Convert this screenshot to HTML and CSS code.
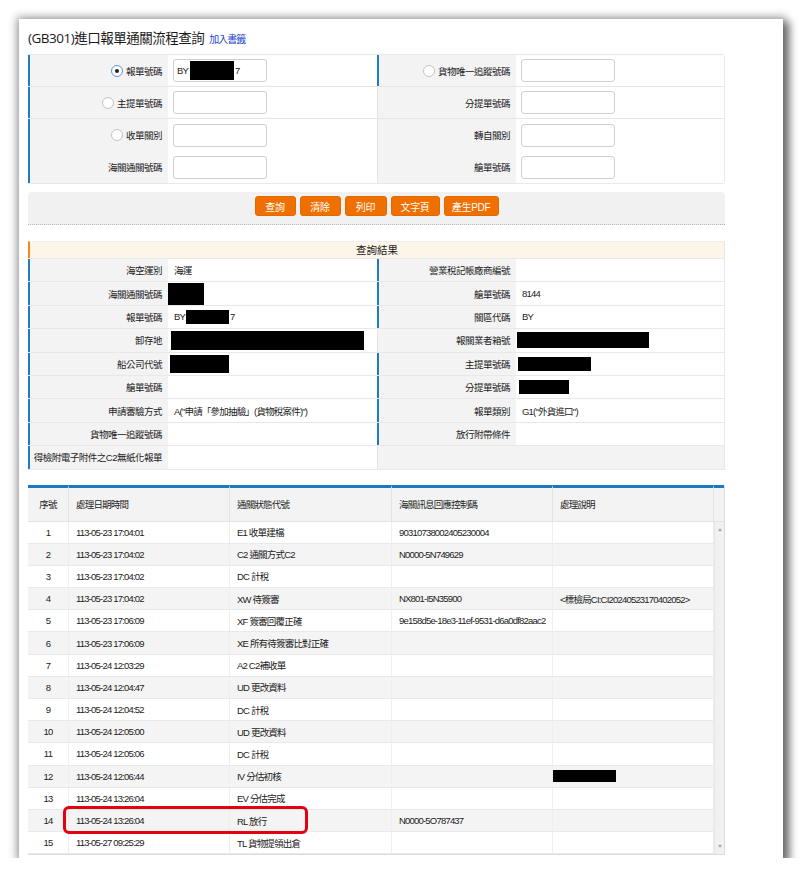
FILE: index.html
```
<!DOCTYPE html>
<html lang="zh-Hant">
<head>
<meta charset="utf-8">
<title>GB301</title>
<link rel="stylesheet" href="styles.css">
</head>
<body>
<div class="frame">
  <div class="title"><span>(GB301)進口報單通關流程查詢</span><a class="bm" href="#">加入書籤</a></div>

  <div class="form">
    <div class="frow sep">
      <div class="lab bl"><span class="radio on"></span>報單號碼</div>
      <div class="val"><span class="inp">BY<span class="rd rd-in"></span>7</span></div>
      <div class="lab bl"><span class="radio"></span>貨物唯一追蹤號碼</div>
      <div class="val"><span class="inp"></span></div>
    </div>
    <div class="frow sep">
      <div class="lab bl"><span class="radio"></span>主提單號碼</div>
      <div class="val"><span class="inp"></span></div>
      <div class="lab vl">分提單號碼</div>
      <div class="val"><span class="inp"></span></div>
    </div>
    <div class="frow">
      <div class="lab bl"><span class="radio"></span>收單關別</div>
      <div class="val"><span class="inp"></span></div>
      <div class="lab vl">轉自關別</div>
      <div class="val"><span class="inp"></span></div>
    </div>
    <div class="frow">
      <div class="lab bl">海關通關號碼</div>
      <div class="val"><span class="inp"></span></div>
      <div class="lab vl">艙單號碼</div>
      <div class="val"><span class="inp"></span></div>
    </div>
  </div>

  <div class="bar">
    <span class="btn b41">查詢</span>
    <span class="btn b41">清除</span>
    <span class="btn b42">列印</span>
    <span class="btn b49">文字頁</span>
    <span class="btn b55">產生PDF</span>
  </div>

  <div class="res">
    <div class="res-h">查詢結果</div>
    <div class="rrow"><div class="lab bl">海空運別</div><div class="rv">海運</div><div class="lab bl">營業稅記帳廠商編號</div><div class="rv"></div></div>
    <div class="rrow"><div class="lab bl">海關通關號碼</div><div class="rv"><span class="rd rd1"></span></div><div class="lab bl">艙單號碼</div><div class="rv">8144</div></div>
    <div class="rrow"><div class="lab bl">報單號碼</div><div class="rv">BY<span class="rd rd2"></span>7</div><div class="lab bl">關區代碼</div><div class="rv">BY</div></div>
    <div class="rrow"><div class="lab bl">卸存地</div><div class="rv"><span class="rd rd3"></span></div><div class="lab vl">報關業者箱號</div><div class="rv"><span class="rd rd4"></span></div></div>
    <div class="rrow"><div class="lab bl">船公司代號</div><div class="rv"><span class="rd rd5"></span></div><div class="lab bl">主提單號碼</div><div class="rv"><span class="rd rd6"></span></div></div>
    <div class="rrow"><div class="lab bl">艙單號碼</div><div class="rv"></div><div class="lab bl">分提單號碼</div><div class="rv"><span class="rd rd7"></span></div></div>
    <div class="rrow"><div class="lab bl">申請審驗方式</div><div class="rv">A("申請「參加抽驗」(貨物稅案件)")</div><div class="lab bl">報單類別</div><div class="rv">G1("外貨進口")</div></div>
    <div class="rrow"><div class="lab bl">貨物唯一追蹤號碼</div><div class="rv"></div><div class="lab bl">放行附帶條件</div><div class="rv"></div></div>
    <div class="rrow"><div class="lab bl">得檢附電子附件之C2無紙化報單</div><div class="rv"></div><div class="lab vl"></div><div class="rv g"></div></div>
  </div>

  <div class="gridbox">
    <table class="dt">
      <colgroup><col class="c0"><col class="c1"><col class="c2"><col class="c3"><col class="c4"></colgroup>
      <thead>
        <tr><th class="ctr">序號</th><th>處理日期時間</th><th>通關狀態代號</th><th>海關訊息回應控制碼</th><th>處理說明</th></tr>
      </thead>
      <tbody>
        <tr><td class="ctr">1</td><td>113-05-23 17:04:01</td><td>E1 收單建檔</td><td>90310738002405230004</td><td></td></tr>
        <tr><td class="ctr">2</td><td>113-05-23 17:04:02</td><td>C2 通關方式C2</td><td>N0000-5N749629</td><td></td></tr>
        <tr><td class="ctr">3</td><td>113-05-23 17:04:02</td><td>DC 計稅</td><td></td><td></td></tr>
        <tr><td class="ctr">4</td><td>113-05-23 17:04:02</td><td>XW 待簽審</td><td>NX801-I5N35900</td><td>&lt;標檢局CI:CI20240523170402052&gt;</td></tr>
        <tr><td class="ctr">5</td><td>113-05-23 17:06:09</td><td>XF 簽審回覆正確</td><td>9e158d5e-18e3-11ef-9531-d6a0df82aac2</td><td></td></tr>
        <tr><td class="ctr">6</td><td>113-05-23 17:06:09</td><td>XE 所有待簽審比對正確</td><td></td><td></td></tr>
        <tr><td class="ctr">7</td><td>113-05-24 12:03:29</td><td>A2 C2補收單</td><td></td><td></td></tr>
        <tr><td class="ctr">8</td><td>113-05-24 12:04:47</td><td>UD 更改資料</td><td></td><td></td></tr>
        <tr><td class="ctr">9</td><td>113-05-24 12:04:52</td><td>DC 計稅</td><td></td><td></td></tr>
        <tr><td class="ctr">10</td><td>113-05-24 12:05:00</td><td>UD 更改資料</td><td></td><td></td></tr>
        <tr><td class="ctr">11</td><td>113-05-24 12:05:06</td><td>DC 計稅</td><td></td><td></td></tr>
        <tr><td class="ctr">12</td><td>113-05-24 12:06:44</td><td>IV 分估初核</td><td></td><td><span class="rd rd8"></span></td></tr>
        <tr><td class="ctr">13</td><td>113-05-24 13:26:04</td><td>EV 分估完成</td><td></td><td></td></tr>
        <tr><td class="ctr">14</td><td>113-05-24 13:26:04</td><td>RL 放行</td><td>N0000-5O787437</td><td></td></tr>
        <tr><td class="ctr">15</td><td>113-05-27 09:25:29</td><td>TL 貨物提領出倉</td><td></td><td></td></tr>
      </tbody>
    </table>
    <div class="sbar">
      <div class="sb-head"></div>
      <div class="sb-track"><span class="arr up"></span><span class="arr dn"></span></div>
    </div>
    <div class="mark"></div>
  </div>
</div>
</body>
</html>
```

FILE: styles.css
```
* { box-sizing: border-box; }

body {
  margin: 0;
  background: #fff;
  font-family: "Liberation Sans", "Noto Sans CJK TC", sans-serif;
  color: #222;
}

.frame {
  margin: 19px 0 0 19px;
  width: 764px;
  height: 839px;
  padding: 8px 0 0 9px;
  background: #fff;
  box-shadow: 0 0 8px 3px rgba(0, 0, 0, 0.28), 5px 5px 8px 2px rgba(0, 0, 0, 0.45);
}

.title {
  display: flex;
  align-items: baseline;
  height: 20px;
  margin-bottom: 7px;
  font-family: "Open Sans", "Noto Sans CJK TC", sans-serif;
  font-size: 13.5px;
  letter-spacing: -0.5px;
  color: #1a1a1a;
  white-space: nowrap;
}

.bm {
  font-size: 10px;
  letter-spacing: -1px;
  color: #1d3fcf;
  text-decoration: none;
  margin-left: 5px;
}

/* search form */
.form {
  width: 697px;
  border-top: 1px solid #e8e8e8;
  border-right: 1px solid #e8e8e8;
  border-bottom: 1px solid #e8e8e8;
  border-radius: 0 3px 3px 0;
}

.frow {
  display: grid;
  grid-template-columns: 140px 209px 139px 1fr;
  height: 32px;
}

.frow.sep { border-bottom: 1px solid #e6e6e6; }

.lab {
  background: #f3f3f3;
  display: flex;
  align-items: center;
  justify-content: flex-end;
  padding-right: 6px;
  font-size: 9.5px;
  letter-spacing: -0.5px;
  color: #222;
  white-space: nowrap;
}

.lab.bl { border-left: 2px solid #217ac3; }
.lab.vl { border-left: 1px solid #e2e2e2; }

.val {
  background: #fff;
  display: flex;
  align-items: center;
  padding-left: 5px;
}

.inp {
  width: 94px;
  height: 23px;
  border: 1px solid #cfcfcf;
  border-radius: 3px;
  display: flex;
  align-items: center;
  padding-left: 3px;
  font-size: 9.5px;
  letter-spacing: -0.8px;
  background: #fff;
}

.radio {
  flex: none;
  width: 12px;
  height: 12px;
  margin-right: 3px;
  border: 1px solid #c2c2c2;
  border-radius: 50%;
  background: #fff;
  display: flex;
  align-items: center;
  justify-content: center;
}

.radio.on { border-color: #5d95d6; }
.radio.on::after {
  content: "";
  width: 4px;
  height: 4px;
  border-radius: 50%;
  background: #222;
}

/* redaction boxes */
.rd { display: inline-block; background: #000; flex: none; }
.rd-in { width: 44px; height: 19px; margin: 0 1px 0 2px; }
.rd1 { width: 36px; height: 22px; margin-left: -6px; }
.rd2 { width: 43px; height: 14px; margin: 0 1px 0 1px; }
.rd3 { width: 193px; height: 19px; margin-left: -3px; }
.rd4 { width: 132px; height: 16px; margin-left: -5px; }
.rd5 { width: 59px; height: 18px; margin-left: -4px; }
.rd6 { width: 73px; height: 14px; margin-left: -4px; }
.rd7 { width: 50px; height: 14px; margin-left: -3px; }
.rd8 { width: 63px; height: 12px; margin-left: -7px; vertical-align: middle; }

/* buttons */
.bar {
  width: 697px;
  margin-top: 8px;
  height: 33px;
  padding-top: 4px;
  background: #f1f1f1;
  border-bottom: 1px dotted #b5b5b5;
  border-radius: 4px 4px 0 0;
  display: flex;
  justify-content: center;
  align-items: flex-start;
  gap: 4px;
}

.btn {
  height: 20px;
  background: #ef7000;
  border: 1px solid #e06a00;
  border-radius: 3px;
  color: #fff;
  font-size: 10px;
  letter-spacing: -0.3px;
  display: flex;
  align-items: center;
  justify-content: center;
}

.b41 { width: 41px; }
.b42 { width: 42px; }
.b49 { width: 49px; }
.b55 { width: 55px; }

/* results */
.res {
  width: 697px;
  margin-top: 16px;
  border-right: 1px solid #e8e8e8;
  border-bottom: 1px solid #e8e8e8;
}

.res-h {
  height: 17px;
  background: #fdf5e7;
  border-left: 2px solid #f2891f;
  border-top: 1px solid #eee;
  font-size: 10.5px;
  line-height: 16px;
  text-align: center;
  color: #1a1a1a;
}

.rrow {
  display: grid;
  grid-template-columns: 140px 209px 139px 1fr;
  height: 23.4px;
  border-top: 1px solid #e8e8e8;
}

.rv {
  background: #fff;
  display: flex;
  align-items: center;
  padding-left: 6px;
  font-size: 9.5px;
  letter-spacing: -0.8px;
  white-space: nowrap;
}

.rv.g { background: #f3f3f3; }

/* history grid */
.gridbox {
  position: relative;
  margin-top: 15px;
  width: 697px;
  display: grid;
  grid-template-columns: 686px 1fr;
  border-right: 1px solid #dcdcdc;
  border-bottom: 1px solid #dcdcdc;
}

.dt {
  width: 686px;
  border-collapse: separate;
  border-spacing: 0;
  table-layout: fixed;
  font-size: 9.5px;
  letter-spacing: -0.8px;
}

.c0 { width: 41px; }
.c1 { width: 161px; }
.c2 { width: 162px; }
.c3 { width: 161px; }
.c4 { width: 161px; }

.dt th {
  height: 37px;
  padding: 0 0 0 7px;
  background: #f3f3f3;
  border-top: 3px solid #1b79c4;
  border-right: 1px solid #e3e3e3;
  border-bottom: 1px solid #e3e3e3;
  font-weight: normal;
  text-align: left;
  color: #222;
}

.dt td {
  height: 22.2px;
  padding: 0 0 0 7px;
  border-bottom: 1px solid #e9e9e9;
  border-right: 1px solid #eeeeee;
  white-space: nowrap;
  overflow: hidden;
  color: #222;
}

.dt .ctr { text-align: center; padding-left: 0; }

.dt tbody tr:nth-child(even) td { background: #f4f4f4; }

.sbar {
  display: flex;
  flex-direction: column;
}

.sb-head {
  height: 37px;
  background: #f3f3f3;
  border-top: 3px solid #1b79c4;
  border-bottom: 1px solid #e3e3e3;
}

.sb-track {
  flex: 1;
  background: #f1f1f1;
  border-left: 1px solid #e5e5e5;
  display: flex;
  flex-direction: column;
  justify-content: space-between;
  align-items: center;
  padding: 6px 0 6px;
}

.arr {
  width: 0;
  height: 0;
  border-left: 2.5px solid transparent;
  border-right: 2.5px solid transparent;
}

.arr.up { border-bottom: 3px solid #a8a8a8; }
.arr.dn { border-top: 3px solid #a8a8a8; }

.mark {
  position: absolute;
  left: 35px;
  top: 321px;
  width: 245px;
  height: 28px;
  border: 3px solid #e5000d;
  border-radius: 6px;
}
```
